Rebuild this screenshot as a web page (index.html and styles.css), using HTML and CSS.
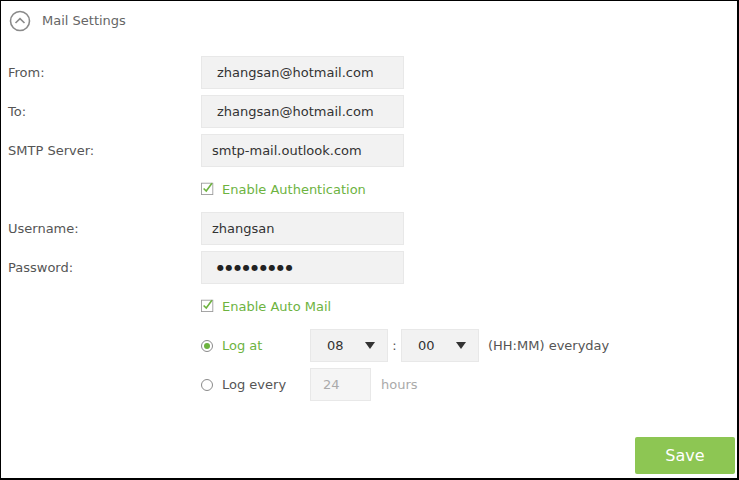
FILE: index.html
```html
<!DOCTYPE html>
<html>
<head>
    <meta charset="utf-8" />
    <title>Mail Settings</title>
    <link rel="stylesheet" href="styles.css">
</head>
<body>

<div class="panel">

    <!-- title -->
    <div class="panel-title">
        <span class="fold-icon">
            <svg width="22" height="22" viewBox="0 0 22 22">
                <circle cx="11" cy="11" r="9.5" fill="none" stroke="#8a8a8a" stroke-width="1.6"/>
                <path d="M6.5 13 L11 8.6 L15.5 13" fill="none" stroke="#8a8a8a" stroke-width="1.6"/>
            </svg>
        </span>
        Mail Settings
    </div>

    <!-- form -->
    <div class="form">
        <div class="row">
            <label class="row-label">From:</label>
            <div class="field field-wide">zhangsan@hotmail.com</div>
        </div>
        <div class="row">
            <label class="row-label">To:</label>
            <div class="field field-wide">zhangsan@hotmail.com</div>
        </div>
        <div class="row">
            <label class="row-label">SMTP Server:</label>
            <div class="field">smtp-mail.outlook.com</div>
        </div>
        <div class="row">
            <span class="row-label"></span>
            <span class="check"><svg width="16" height="16" viewBox="0 0 16 16"><rect x="0.5" y="2.5" width="13" height="13" fill="#fff" stroke="#9a9a9a"/><path d="M3 8.5 L6 11.5 L12.5 2.5" fill="none" stroke="#6db33f" stroke-width="1.8"/></svg></span>
            <span class="check-text">Enable Authentication</span>
        </div>
        <div class="row">
            <label class="row-label">Username:</label>
            <div class="field">zhangsan</div>
        </div>
        <div class="row">
            <label class="row-label">Password:</label>
            <div class="field field-wide"><span class="dots">●●●●●●●●●</span></div>
        </div>
        <div class="row">
            <span class="row-label"></span>
            <span class="check"><svg width="16" height="16" viewBox="0 0 16 16"><rect x="0.5" y="2.5" width="13" height="13" fill="#fff" stroke="#9a9a9a"/><path d="M3 8.5 L6 11.5 L12.5 2.5" fill="none" stroke="#6db33f" stroke-width="1.8"/></svg></span>
            <span class="check-text">Enable Auto Mail</span>
        </div>
        <div class="row">
            <span class="row-label"></span>
            <span class="radio radio-on"></span>
            <span class="radio-text radio-text-on">Log at</span>
            <div class="select">08<span class="caret"></span></div>
            <span class="colon">:</span>
            <div class="select">00<span class="caret"></span></div>
            <span class="hint">(HH:MM) everyday</span>
        </div>
        <div class="row">
            <span class="row-label"></span>
            <span class="radio"></span>
            <span class="radio-text">Log every</span>
            <div class="field field-small">24</div>
            <span class="hint hint-off">hours</span>
        </div>
    </div>

    <div class="panel-foot">
        <a class="save-btn" href="javascript:;">Save</a>
    </div>
</div>

</body>
</html>
```

FILE: styles.css
```css
html,body{margin:0;padding:0;}
body{
    width:739px;height:480px;box-sizing:border-box;
    border:1px solid #000;border-right-width:2px;border-bottom-width:2px;
    background:#fff;
    font-family:"DejaVu Sans",Verdana,sans-serif;font-size:13px;color:#555;
}

.panel{display:flex;flex-direction:column;height:100%;}

/* title */
.panel-title{
    height:39px;display:flex;align-items:center;
    padding-left:8px;color:#666;font-size:13px;
}
.fold-icon{display:flex;width:22px;height:22px;margin-right:11px;}

/* rows */
.form{padding:16px 0 0 7px;}
.row{display:flex;align-items:center;height:33px;margin-bottom:6px;}
.row-label{width:193px;flex:none;color:#555;}

.field{
    width:203px;height:33px;box-sizing:border-box;
    display:flex;align-items:center;padding-left:10px;
    background:#f2f2f2;border:1px solid #e8e8e8;color:#333;
}
.field-wide{padding-left:15px;}
.field-small{width:61px;padding-left:12px;color:#aaa;background:#f5f5f5;}
.dots{font-size:8px;letter-spacing:1.6px;color:#222;}

/* checkbox */
.check{display:flex;width:14px;height:16px;margin-top:-3px;}
.check-text{margin-left:7px;color:#6db33f;}

/* radio */
.radio{
    width:12px;height:12px;box-sizing:border-box;border-radius:50%;
    border:1px solid #8a8a8a;background:#fff;position:relative;
}
.radio-on:after{
    content:"";position:absolute;left:2px;top:2px;
    width:6px;height:6px;border-radius:50%;background:#6db33f;
}
.radio-text{width:88px;margin-left:9px;color:#555;}
.radio-text-on{color:#6db33f;}

/* select */
.select{
    width:78px;height:33px;box-sizing:border-box;
    display:flex;align-items:center;justify-content:space-between;
    padding:0 12px 0 16px;
    background:#f2f2f2;border:1px solid #e8e8e8;color:#333;
}
.caret{
    width:0;height:0;
    border-left:5px solid transparent;border-right:5px solid transparent;
    border-top:7px solid #333;
}
.colon{width:13px;text-align:center;color:#555;}
.hint{margin-left:9px;color:#555;}
.hint-off{margin-left:10px;color:#aaa;}

/* footer */
.panel-foot{display:flex;justify-content:flex-end;margin-top:auto;padding:0 2px 4px 0;}
.save-btn{
    width:100px;height:37px;line-height:37px;display:block;text-align:center;
    background:#8dc653;color:#fff;font-size:16px;text-decoration:none;
    border-radius:2px;
}
```
